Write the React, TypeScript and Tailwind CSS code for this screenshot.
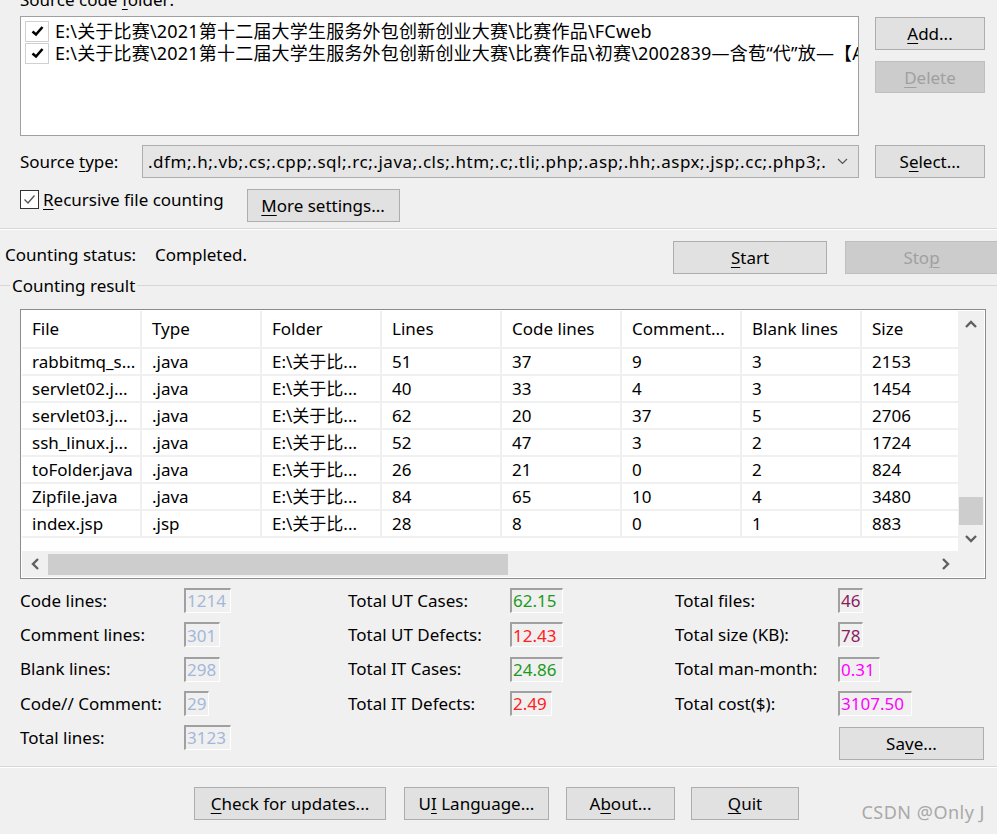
import type { ReactNode } from "react"

const K = ({ c }: { c: string }) => (
  <span className="underline underline-offset-[3px] decoration-1">{c}</span>
)

function Btn({
  children,
  className = "",
  disabled = false,
}: {
  children: ReactNode
  className?: string
  disabled?: boolean
}) {
  return (
    <button
      className={
        "flex items-center justify-center border leading-none whitespace-pre " +
        (disabled
          ? "bg-[#cccccc] border-[#bfbfbf] text-[#a0a0a0] "
          : "bg-[#e1e1e1] border-[#adadad] text-black ") +
        className
      }
    >
      <span>{children}</span>
    </button>
  )
}

function Field({ value, w, color }: { value: string; w: string; color: string }) {
  return (
    <div
      className={
        "h-[25px] flex items-center pl-[1px] border-t-2 border-l-2 border-b border-r border-t-[#a0a0a0] border-l-[#a0a0a0] border-b-white border-r-white bg-[#f0f0f0] " +
        w +
        " " +
        color
      }
    >
      {value}
    </div>
  )
}

function ListCheck() {
  return (
    <div className="w-[24px] h-[21px] border border-[#d0d0d0] bg-white flex items-center justify-center shrink-0">
      <svg width="13" height="12" viewBox="0 0 13 12">
        <path d="M1.5 6.5 L5 9.5 L11.5 2" fill="none" stroke="#000" strokeWidth="2.6" />
      </svg>
    </div>
  )
}

const Chevron = ({ dir }: { dir: "up" | "down" | "left" | "right" }) => {
  const d = {
    up: "M1 7 L6 2 L11 7",
    down: "M1 2 L6 7 L11 2",
    left: "M7 1 L2 6 L7 11",
    right: "M2 1 L7 6 L2 11",
  }[dir]
  const vb = dir === "up" || dir === "down" ? "0 0 12 9" : "0 0 9 12"
  const size = dir === "up" || dir === "down" ? { width: 12, height: 9 } : { width: 9, height: 12 }
  return (
    <svg {...size} viewBox={vb}>
      <path d={d} fill="none" stroke="#606060" strokeWidth="2.4" />
    </svg>
  )
}

const headers = ["File", "Type", "Folder", "Lines", "Code lines", "Comment...", "Blank lines", "Size"]

const rows = [
  ["rabbitmq_s...", ".java", "E:\\关于比...", "51", "37", "9", "3", "2153"],
  ["servlet02.j...", ".java", "E:\\关于比...", "40", "33", "4", "3", "1454"],
  ["servlet03.j...", ".java", "E:\\关于比...", "62", "20", "37", "5", "2706"],
  ["ssh_linux.j...", ".java", "E:\\关于比...", "52", "47", "3", "2", "1724"],
  ["toFolder.java", ".java", "E:\\关于比...", "26", "21", "0", "2", "824"],
  ["Zipfile.java", ".java", "E:\\关于比...", "84", "65", "10", "4", "3480"],
  ["index.jsp", ".jsp", "E:\\关于比...", "28", "8", "0", "1", "883"],
]

const col1 = [
  ["Code lines:", "1214", "w-[47px]"],
  ["Comment lines:", "301", "w-[36px]"],
  ["Blank lines:", "298", "w-[36px]"],
  ["Code// Comment:", "29", "w-[25px]"],
  ["Total lines:", "3123", "w-[47px]"],
]

const col2 = [
  ["Total UT Cases:", "62.15", "w-[53px]", "text-[#1c9a1c]"],
  ["Total UT Defects:", "12.43", "w-[53px]", "text-[#ff2020]"],
  ["Total IT Cases:", "24.86", "w-[53px]", "text-[#1c9a1c]"],
  ["Total IT Defects:", "2.49", "w-[42px]", "text-[#ff2020]"],
]

const col3 = [
  ["Total files:", "46", "w-[25px]", "text-[#8b1c60]"],
  ["Total size (KB):", "78", "w-[25px]", "text-[#8b1c60]"],
  ["Total man-month:", "0.31", "w-[42px]", "text-[#ff00ff]"],
  ["Total cost($):", "3107.50", "w-[74px]", "text-[#ff00ff]"],
]

export default function App() {
  return (
    <div className="w-[997px] h-[834px] overflow-hidden bg-[#f0f0f0] text-[17px] text-black font-['Noto_Sans','Noto_Sans_CJK_SC',sans-serif]">
      {/* source folder */}
      <div className="ml-[20px] -mt-[16px] h-[32px] leading-[32px]">
        Source code <K c="f" />older:
      </div>
      <div className="flex">
        <div className="ml-[20px] w-[839px] h-[120px] bg-white border border-[#a0a0a0] pt-[3px] pl-[4px] overflow-hidden text-[18px]">
          <div className="h-[22px] flex items-center gap-[6px] whitespace-nowrap">
            <ListCheck />
            <span className="tracking-[0.2px]">E:\关于比赛\2021第十二届大学生服务外包创新创业大赛\比赛作品\FCweb</span>
          </div>
          <div className="h-[22px] flex items-center gap-[6px] whitespace-nowrap">
            <ListCheck />
            <span className="tracking-[0.2px]">E:\关于比赛\2021第十二届大学生服务外包创新创业大赛\比赛作品\初赛\2002839—含苞“代”放—【A</span>
          </div>
        </div>
        <div className="ml-[16px] flex flex-col">
          <Btn className="mt-[1px] w-[110px] h-[33px]">
            <K c="A" />dd...
          </Btn>
          <Btn disabled className="mt-[11px] w-[110px] h-[32px]">
            <K c="D" />elete
          </Btn>
        </div>
      </div>

      {/* source type */}
      <div className="flex items-center mt-[9px] h-[33px]">
        <div className="ml-[20px] w-[122px]">
          Source <K c="t" />ype:
        </div>
        <div className="w-[717px] h-[33px] bg-[#e5e5e5] border border-[#adadad] flex items-center pl-[5px] pr-[10px] overflow-hidden">
          <span className="flex-1 whitespace-nowrap overflow-hidden tracking-[0.55px]">
            .dfm;.h;.vb;.cs;.cpp;.sql;.rc;.java;.cls;.htm;.c;.tli;.php;.asp;.hh;.aspx;.jsp;.cc;.php3;.
          </span>
          <svg width="11" height="7" viewBox="0 0 11 7" className="ml-[6px] shrink-0">
            <path d="M1 1 L5.5 5.5 L10 1" fill="none" stroke="#555" strokeWidth="1.2" />
          </svg>
        </div>
        <Btn className="ml-[16px] w-[110px] h-[33px]">
          S<K c="e" />lect...
        </Btn>
      </div>

      {/* recursive */}
      <div className="flex items-start mt-[11px] h-[33px]">
        <div className="ml-[20px] flex items-center h-[21px] gap-[4px]">
          <div className="w-[19px] h-[19px] border border-[#333] bg-white flex items-center justify-center">
            <svg width="13" height="11" viewBox="0 0 13 11">
              <path d="M1.5 5.5 L5 9 L11.5 1.5" fill="none" stroke="#555" strokeWidth="1.4" />
            </svg>
          </div>
          <span>
            <K c="R" />ecursive file counting
          </span>
        </div>
        <Btn className="ml-[23px] w-[153px] h-[33px]">
          <K c="M" />ore settings...
        </Btn>
      </div>

      <div className="mt-[6px] h-[2px] border-t border-t-[#d6d6d6] border-b border-b-white" />

      {/* status */}
      <div className="flex items-start mt-[11px] h-[33px]">
        <div className="ml-[5px] w-[150px] mt-[1px]">Counting status:</div>
        <div className="mt-[1px]">Completed.</div>
        <Btn className="ml-auto w-[154px] h-[33px]">
          <K c="S" />tart
        </Btn>
        <Btn disabled className="ml-[18px] w-[152px] h-[33px] border-r-0">
          Sto<K c="p" />
        </Btn>
      </div>

      {/* group header */}
      <div className="flex items-center h-[22px]">
        <div className="w-[10px] h-px bg-[#d6d6d6]" />
        <span className="px-[2px] leading-none">Counting result</span>
        <div className="flex-1 h-px bg-[#d6d6d6]" />
      </div>

      {/* table */}
      <div className="ml-[20px] mt-[13px] w-[966px] h-[270px] border border-[#8c8c8c] bg-white p-px flex flex-col">
        <div className="flex h-[240px]">
          <div className="w-[936px] overflow-hidden">
            <div className="grid grid-cols-[repeat(8,120px)] w-[960px]">
              {headers.map(h => (
                <div key={h} className="h-[38px] pl-[10px] flex items-center border-r-2 border-b-2 border-[#f0f0f0] whitespace-nowrap">
                  {h}
                </div>
              ))}
              {rows.map((r, i) =>
                r.map((c, j) => (
                  <div
                    key={i + "-" + j}
                    className="h-[27px] pl-[10px] flex items-center border-r-2 border-b-2 border-[#f0f0f0] whitespace-nowrap overflow-hidden"
                  >
                    {c}
                  </div>
                ))
              )}
            </div>
          </div>
          <div className="w-[26px] bg-[#f0f0f0] flex flex-col">
            <div className="h-[26px] flex items-center justify-center">
              <Chevron dir="up" />
            </div>
            <div className="flex-1 flex flex-col justify-end px-px">
              <div className="h-[28px] bg-[#cdcdcd]" />
            </div>
            <div className="h-[26px] flex items-center justify-center">
              <Chevron dir="down" />
            </div>
          </div>
        </div>
        <div className="h-[26px] bg-[#f0f0f0] flex items-center">
          <div className="w-[26px] flex justify-center">
            <Chevron dir="left" />
          </div>
          <div className="w-[460px] h-[21px] bg-[#cdcdcd]" />
          <div className="flex-1" />
          <div className="w-[26px] flex justify-center">
            <Chevron dir="right" />
          </div>
          <div className="w-[26px]" />
        </div>
      </div>

      {/* stats */}
      <div className="flex mt-[9px] ml-[20px]">
        <div className="w-[328px] flex flex-col">
          {col1.map(([l, v, w]) => (
            <div key={l} className="h-[34.3px] flex items-start">
              <div className="w-[164px] h-[25px] flex items-center">{l}</div>
              <Field value={v} w={w} color="text-[#a3b8d8]" />
            </div>
          ))}
        </div>
        <div className="w-[327px] flex flex-col">
          {col2.map(([l, v, w, c]) => (
            <div key={l} className="h-[34.3px] flex items-start">
              <div className="w-[162px] h-[25px] flex items-center">{l}</div>
              <Field value={v} w={w} color={c} />
            </div>
          ))}
        </div>
        <div className="flex flex-col">
          {col3.map(([l, v, w, c]) => (
            <div key={l} className="h-[34.3px] flex items-start">
              <div className="w-[163px] h-[25px] flex items-center">{l}</div>
              <Field value={v} w={w} color={c} />
            </div>
          ))}
          <Btn className="ml-[164px] mt-[2px] w-[145px] h-[33px]">
            Sa<K c="v" />e...
          </Btn>
        </div>
      </div>

      <div className="mt-[6px] h-[2px] border-t border-t-[#d6d6d6] border-b border-b-white" />

      {/* bottom buttons */}
      <div className="flex items-start mt-[19px]">
        <Btn className="ml-[194px] w-[192px] h-[33px]">
          <K c="C" />heck for updates...
        </Btn>
        <Btn className="ml-[18px] w-[145px] h-[33px]">
          U<K c="I" /> Language...
        </Btn>
        <Btn className="ml-[17px] w-[109px] h-[33px]">
          A<K c="b" />out...
        </Btn>
        <Btn className="ml-[16px] w-[108px] h-[33px]">
          <K c="Q" />uit
        </Btn>
        <div className="ml-auto mr-[12px] mt-[12px] text-[18px] text-[#a9a9a9] tracking-[0.5px]">
          CSDN @Only J
        </div>
      </div>
    </div>
  )
}
